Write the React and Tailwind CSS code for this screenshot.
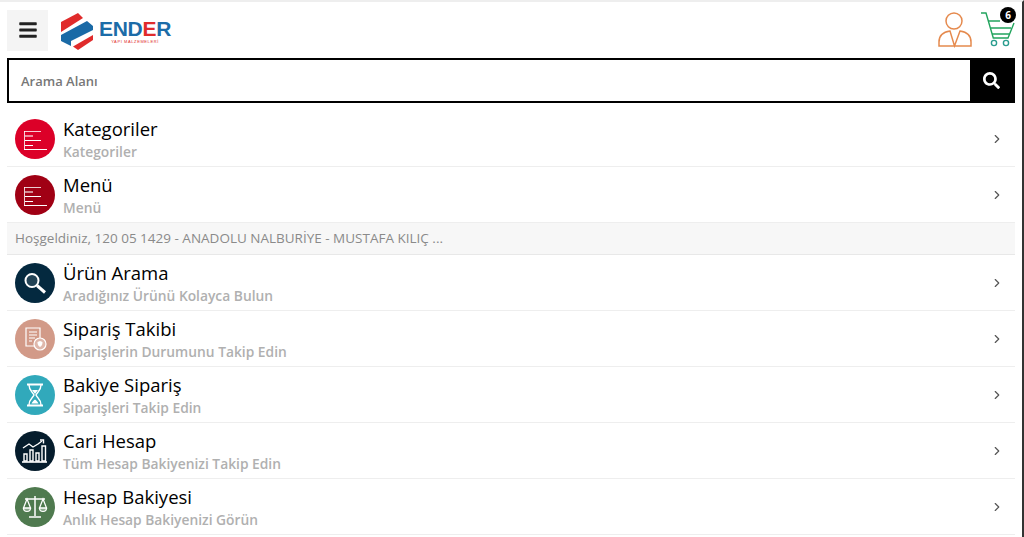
import React from "react"
import { FaBars, FaSearch } from "react-icons/fa"
import { FiChevronRight } from "react-icons/fi"

function ListIcon() {
    return (
        <svg width="24" height="24" viewBox="0 0 24 24" fill="none" stroke="#fff" strokeWidth="1">
            <path d="M1.5 4v19" strokeOpacity=".8" />
            <path d="M1 4.5h17" strokeOpacity=".8" />
            <path d="M2 9h8" strokeWidth="2" strokeOpacity=".55" />
            <path d="M2 13.5h16M2 18.5h8M1 22.5h23" />
        </svg>
    )
}

function SearchIcon() {
    return (
        <svg width="26" height="26" viewBox="0 0 26 26" fill="none" stroke="#fff">
            <circle cx="10" cy="10.5" r="6.5" strokeWidth="2" fill="#fff" fillOpacity=".12" />
            <path d="M15 15.5l8 7" strokeWidth="3" />
        </svg>
    )
}

function OrderIcon() {
    return (
        <svg width="26" height="26" viewBox="0 0 26 26" fill="none" stroke="#fff" strokeWidth="1.2">
            <path d="M13 20H4V2h14v10" />
            <path d="M7 6h8M7 9h8M7 12h6M7 15h3" />
            <circle cx="18" cy="18" r="6" fill="#fff" fillOpacity=".3" />
            <path d="M15.5 16l2.5-1 2.5 1c0 3-1 4-2.500 5-1.500-1-2.500-2-2.500-5z" fill="#fff" stroke="none" />
        </svg>
    )
}

function HourglassIcon() {
    return (
        <svg width="24" height="26" viewBox="0 0 24 26" fill="none" stroke="#fff" strokeWidth="1.4">
            <path d="M4 2.5h16M4 23.5h16" strokeWidth="2.2" />
            <path d="M6 3c0 6 4 7 5 10-1 3-5 4-5 10M18 3c0 6-4 7-5 10 1 3 5 4 5 10" />
            <path d="M9 8h6l-3 4zM8.5 21.5c1-2 2-3 3.500-4 1.500 1 2.500 2 3.500 4z" fill="#fff" stroke="none" />
        </svg>
    )
}

function ChartIcon() {
    return (
        <svg width="26" height="26" viewBox="0 0 26 26" fill="none" stroke="#fff" strokeWidth="1.4">
            <path d="M1 10l6-4 4 3 5-3 4-3" />
            <path d="M18 2h3.500v3.500" />
            <path d="M2 16h3v7H2zM8 12h3v11H8zM14 15h3v8h-3zM20 8h3.500v15H20z" />
            <path d="M0 24h25" strokeWidth="1.6" />
        </svg>
    )
}

function ScaleIcon() {
    return (
        <svg width="26" height="26" viewBox="0 0 26 26" fill="none" stroke="#fff" strokeWidth="1.2">
            <path d="M13 2v20M7 23h12M3 5h20" strokeWidth="1.5" />
            <path d="M5 5L1.500 14h7zM21 5l-3.500 9h7z" />
            <path d="M1.500 14a3.500 3.500 0 0 0 7 0zM17.500 14a3.500 3.500 0 0 0 7 0z" fill="#fff" fillOpacity=".35" />
        </svg>
    )
}

function Logo() {
    return (
        <div className="flex items-center gap-[5px] ml-[13px]">
            <svg width="33" height="38" viewBox="0 0 33 38" className="mt-[4px]">
                <path d="M0 9L17 0l5 5L0 19z" fill="#e02b2b" />
                <path d="M0 22L26 8l6 5v4L10 28v5L0 28z" fill="#1a6aa6" />
                <path d="M12 33.500L32 22v5L17 37z" fill="#e02b2b" />
            </svg>
            <div className="flex flex-col items-center mt-[2px]">
                <span className="font-['Liberation_Sans'] text-[21px] leading-[21px] font-bold tracking-[-0.3px] text-[#1c6ca8]">
                    END<span className="text-[#e02b2b]">E</span>R
                </span>
                <span className="text-[4px] leading-[5px] tracking-[0.6px] text-[#e02b2b] font-['Liberation_Sans']">YAPI MALZEMELERİ</span>
            </div>
        </div>
    )
}

function MenuRow({ title, sub, color, icon }) {
    return (
        <div className="flex items-center h-[56px] pl-[8px] pr-[11px] border-b border-[#eeeeee]">
            <div className={`w-[40px] h-[40px] rounded-full flex items-center justify-center shrink-0 ${color}`}>
                {icon}
            </div>
            <div className="ml-[8px] flex-1 min-w-0">
                <div className="text-[18.5px] leading-[24px] text-black">{title}</div>
                <div className="mt-[2px] text-[13.8px] leading-[18px] font-semibold text-[#b0b0b0]">{sub}</div>
            </div>
            <FiChevronRight size={14} className="text-[#555555]" />
        </div>
    )
}

export default function App() {
    return (
        <div className="h-[537px] overflow-hidden bg-white font-['Open_Sans',sans-serif] border-t-2 border-r-2 border-t-[#eeeeee] border-r-[#333333]">
            <div className="flex items-center justify-between h-[56px] px-[7px]">
                <div className="flex items-center">
                    <button className="w-[41px] h-[41px] bg-[#f4f4f4] flex items-center justify-center text-[#222222]">
                        <FaBars size={20} />
                    </button>
                    <Logo />
                </div>
                <div className="flex items-center gap-[9px]">
                    <svg width="34" height="38" viewBox="0 0 34 38" fill="none" stroke="#e58a4e" strokeWidth="1.5">
                        <circle cx="16" cy="10" r="8" />
                        <path d="M1 35v-4c0-6 4-10 11-11l4.500 15 5.500-15c7 1 11 5 11 11v4z" />
                    </svg>
                    <div className="relative w-[34px] h-[38px]">
                        <svg width="34" height="38" viewBox="0 0 34 38" fill="none" stroke="#22a45d" strokeWidth="1.4">
                            <path d="M0 2h5l7.300 25H27l6-15" />
                            <path d="M7 10h12M10 17h20M11 23h17" />
                            <circle cx="13" cy="32" r="2.600" stroke="#2a9d8f" />
                            <circle cx="25" cy="32" r="2.600" stroke="#2a9d8f" />
                        </svg>
                        <span className="absolute -top-[4px] -right-[1px] w-[16px] h-[16px] rounded-full bg-black text-white text-[10px] font-bold leading-[16px] text-center">6</span>
                    </div>
                </div>
            </div>

            <div className="flex items-stretch h-[45px] mx-[7px] border-2 border-black">
                <div className="flex-1 flex items-center pl-[12px] pt-[2px] text-[13px] font-semibold text-[#777777]">Arama Alanı</div>
                <div className="w-[43px] bg-black flex items-center justify-center text-white">
                    <FaSearch size={17} />
                </div>
            </div>

            <div className="mx-[7px] mt-[8px]">
                <MenuRow title="Kategoriler" sub="Kategoriler" color="bg-[#dc0028]" icon={<ListIcon />} />
                <MenuRow title="Menü" sub="Menü" color="bg-[#a00014]" icon={<ListIcon />} />
                <div className="flex items-center h-[32px] pl-[8px] bg-[#f7f7f7] border-b border-[#e8e8e8] text-[13.5px] text-[#8a8a8a]">
                    Hoşgeldiniz, 120 05 1429 - ANADOLU NALBURİYE - MUSTAFA KILIÇ ...
                </div>
                <MenuRow title="Ürün Arama" sub="Aradığınız Ürünü Kolayca Bulun" color="bg-[#04293f]" icon={<SearchIcon />} />
                <MenuRow title="Sipariş Takibi" sub="Siparişlerin Durumunu Takip Edin" color="bg-[#d29a88]" icon={<OrderIcon />} />
                <MenuRow title="Bakiye Sipariş" sub="Siparişleri Takip Edin" color="bg-[#31a9bb]" icon={<HourglassIcon />} />
                <MenuRow title="Cari Hesap" sub="Tüm Hesap Bakiyenizi Takip Edin" color="bg-[#051c2c]" icon={<ChartIcon />} />
                <MenuRow title="Hesap Bakiyesi" sub="Anlık Hesap Bakiyenizi Görün" color="bg-[#4f7a4f]" icon={<ScaleIcon />} />
            </div>
        </div>
    )
}
